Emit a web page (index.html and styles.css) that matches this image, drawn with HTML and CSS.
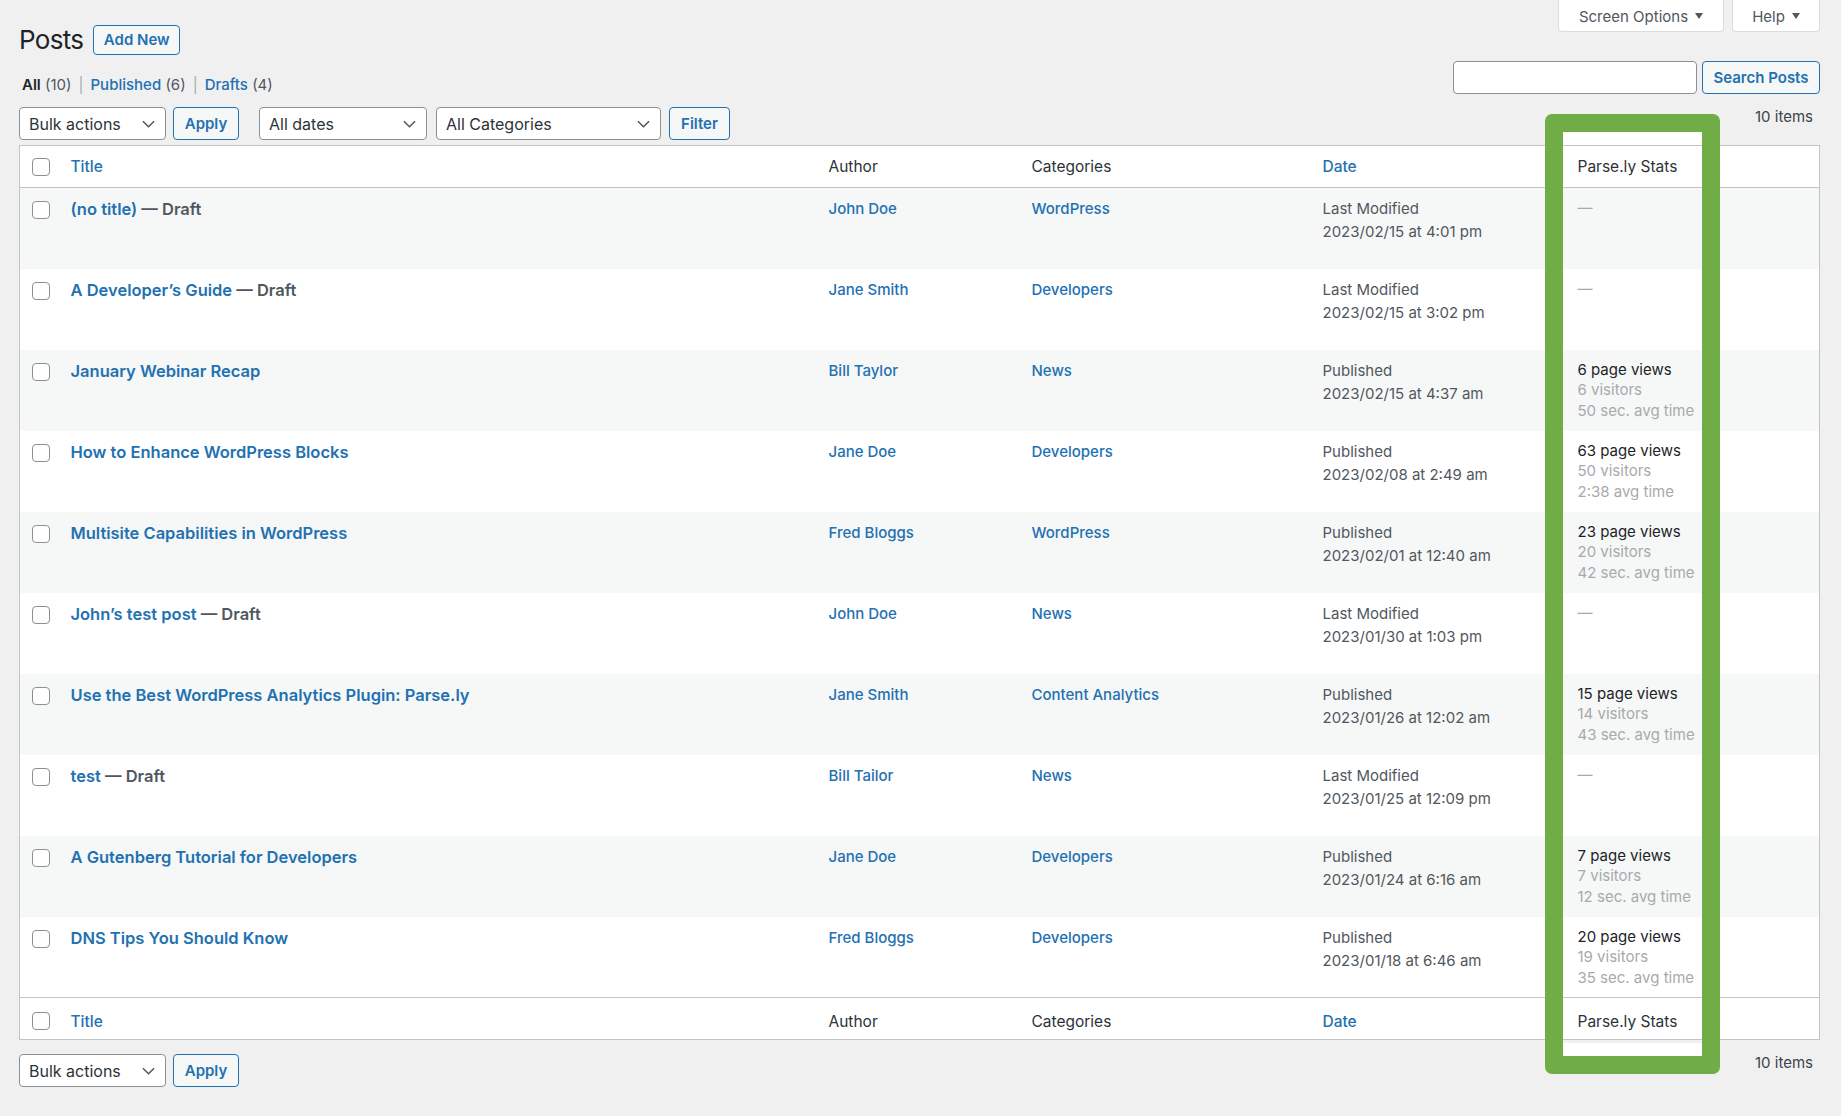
FILE: index.html
```html
<!DOCTYPE html>
<html lang="en">
<head>
    <meta charset="UTF-8">
    <title>Posts</title>
    <link rel="stylesheet" href="styles.css">
</head>
<body>
<div class="wrap">
    <div class="top-row">
        <div class="heading">
            <h1>Posts</h1>
            <button class="btn btn-add">Add New</button>
        </div>
        <div class="meta-tabs">
            <div class="tab tab-screen">Screen Options <span class="tri"></span></div>
            <div class="tab tab-help">Help <span class="tri"></span></div>
        </div>
    </div>

    <div class="views-row">
        <ul class="subsubsub">
            <li><b>All</b> <span class="count">(10)</span></li>
            <li class="sep">|</li>
            <li><a href="#">Published</a> <span class="count">(6)</span></li>
            <li class="sep">|</li>
            <li><a href="#">Drafts</a> <span class="count">(4)</span></li>
        </ul>
        <div class="search-box">
            <div class="search-input"></div>
            <button class="btn btn-search">Search Posts</button>
        </div>
    </div>

    <div class="tablenav">
        <div class="actions">
            <div class="select w-bulk">Bulk actions <svg viewBox="0 0 14 8"><path d="M1 1l6 6 6-6"/></svg></div>
            <button class="btn btn-apply">Apply</button>
            <div class="select w-dates">All dates <svg viewBox="0 0 14 8"><path d="M1 1l6 6 6-6"/></svg></div>
            <div class="select w-cats">All Categories <svg viewBox="0 0 14 8"><path d="M1 1l6 6 6-6"/></svg></div>
            <button class="btn btn-filter">Filter</button>
        </div>
        <div class="num-items">10 items</div>
    </div>

    <table class="posts">
        <colgroup>
            <col class="c-cb"><col class="c-title"><col class="c-author"><col class="c-cat"><col class="c-date"><col class="c-stats">
        </colgroup>
        <thead>
            <tr>
                <th><span class="cb"></span></th>
                <th><a href="#">Title</a></th>
                <th>Author</th>
                <th>Categories</th>
                <th><a href="#">Date</a></th>
                <th>Parse.ly Stats</th>
            </tr>
        </thead>
        <tbody>
            <tr>
                <td><span class="cb"></span></td>
                <td><a class="row-title" href="#">(no title)</a><span class="state"> — Draft</span></td>
                <td><a href="#">John Doe</a></td>
                <td><a href="#">WordPress</a></td>
                <td class="date">Last Modified<br>2023/02/15 at 4:01 pm</td>
                <td class="stats"><span class="dash">—</span></td>
            </tr>
            <tr>
                <td><span class="cb"></span></td>
                <td><a class="row-title" href="#">A Developer’s Guide</a><span class="state"> — Draft</span></td>
                <td><a href="#">Jane Smith</a></td>
                <td><a href="#">Developers</a></td>
                <td class="date">Last Modified<br>2023/02/15 at 3:02 pm</td>
                <td class="stats"><span class="dash">—</span></td>
            </tr>
            <tr>
                <td><span class="cb"></span></td>
                <td><a class="row-title" href="#">January Webinar Recap</a></td>
                <td><a href="#">Bill Taylor</a></td>
                <td><a href="#">News</a></td>
                <td class="date">Published<br>2023/02/15 at 4:37 am</td>
                <td class="stats"><div class="views">6 page views</div><div>6 visitors</div><div>50 sec. avg time</div></td>
            </tr>
            <tr>
                <td><span class="cb"></span></td>
                <td><a class="row-title" href="#">How to Enhance WordPress Blocks</a></td>
                <td><a href="#">Jane Doe</a></td>
                <td><a href="#">Developers</a></td>
                <td class="date">Published<br>2023/02/08 at 2:49 am</td>
                <td class="stats"><div class="views">63 page views</div><div>50 visitors</div><div>2:38 avg time</div></td>
            </tr>
            <tr>
                <td><span class="cb"></span></td>
                <td><a class="row-title" href="#">Multisite Capabilities in WordPress</a></td>
                <td><a href="#">Fred Bloggs</a></td>
                <td><a href="#">WordPress</a></td>
                <td class="date">Published<br>2023/02/01 at 12:40 am</td>
                <td class="stats"><div class="views">23 page views</div><div>20 visitors</div><div>42 sec. avg time</div></td>
            </tr>
            <tr>
                <td><span class="cb"></span></td>
                <td><a class="row-title" href="#">John’s test post</a><span class="state"> — Draft</span></td>
                <td><a href="#">John Doe</a></td>
                <td><a href="#">News</a></td>
                <td class="date">Last Modified<br>2023/01/30 at 1:03 pm</td>
                <td class="stats"><span class="dash">—</span></td>
            </tr>
            <tr>
                <td><span class="cb"></span></td>
                <td><a class="row-title" href="#">Use the Best WordPress Analytics Plugin: Parse.ly</a></td>
                <td><a href="#">Jane Smith</a></td>
                <td><a href="#">Content Analytics</a></td>
                <td class="date">Published<br>2023/01/26 at 12:02 am</td>
                <td class="stats"><div class="views">15 page views</div><div>14 visitors</div><div>43 sec. avg time</div></td>
            </tr>
            <tr>
                <td><span class="cb"></span></td>
                <td><a class="row-title" href="#">test</a><span class="state"> — Draft</span></td>
                <td><a href="#">Bill Tailor</a></td>
                <td><a href="#">News</a></td>
                <td class="date">Last Modified<br>2023/01/25 at 12:09 pm</td>
                <td class="stats"><span class="dash">—</span></td>
            </tr>
            <tr>
                <td><span class="cb"></span></td>
                <td><a class="row-title" href="#">A Gutenberg Tutorial for Developers</a></td>
                <td><a href="#">Jane Doe</a></td>
                <td><a href="#">Developers</a></td>
                <td class="date">Published<br>2023/01/24 at 6:16 am</td>
                <td class="stats"><div class="views">7 page views</div><div>7 visitors</div><div>12 sec. avg time</div></td>
            </tr>
            <tr>
                <td><span class="cb"></span></td>
                <td><a class="row-title" href="#">DNS Tips You Should Know</a></td>
                <td><a href="#">Fred Bloggs</a></td>
                <td><a href="#">Developers</a></td>
                <td class="date">Published<br>2023/01/18 at 6:46 am</td>
                <td class="stats"><div class="views">20 page views</div><div>19 visitors</div><div>35 sec. avg time</div></td>
            </tr>
        </tbody>
        <tfoot>
            <tr>
                <th><span class="cb"></span></th>
                <th><a href="#">Title</a></th>
                <th>Author</th>
                <th>Categories</th>
                <th><a href="#">Date</a></th>
                <th>Parse.ly Stats</th>
            </tr>
        </tfoot>
    </table>

    <div class="tablenav tablenav-bottom">
        <div class="actions">
            <div class="select w-bulk">Bulk actions <svg viewBox="0 0 14 8"><path d="M1 1l6 6 6-6"/></svg></div>
            <button class="btn btn-apply">Apply</button>
        </div>
        <div class="num-items">10 items</div>
    </div>

    <div class="highlight"></div>
</div>
</body>
</html>
```

FILE: styles.css
```css
body {
    margin: 0;
    background: #f0f0f1;
    font-family: Inter, "Noto Sans", sans-serif;
    font-size: 15px;
    color: #3c434a;
}
a {
    color: #2271b1;
    text-decoration: none;
    font-weight: 500;
}
.wrap {
    position: relative;
    padding: 0 21px 0 19px;
    min-height: 1116px;
    box-sizing: border-box;
}
.top-row {
    display: flex;
    justify-content: space-between;
    align-items: flex-start;
    height: 54px;
}
.heading {
    display: flex;
    align-items: center;
    gap: 10px;
    margin-top: 24px;
}
.heading h1 {
    margin: 0;
    font-size: 26px;
    font-weight: 400;
    color: #1d2327;
    letter-spacing: -0.7px;
}
.btn {
    font-family: inherit;
    font-size: 15px;
    font-weight: 600;
    color: #2271b1;
    background: #f6f7f7;
    border: 1px solid #2271b1;
    border-radius: 4px;
    height: 33px;
    padding: 0 11px;
    box-sizing: border-box;
}
.btn-add {
    width: 87px;
    height: 30px;
    padding: 0;
}
.meta-tabs {
    display: flex;
    gap: 8px;
}
.tab {
    height: 32px;
    background: #fff;
    border: 1px solid #dcdcde;
    border-top: none;
    border-radius: 0 0 4px 4px;
    box-sizing: border-box;
    display: flex;
    align-items: center;
    justify-content: center;
    gap: 7px;
    color: #50575e;
    font-size: 15px;
    padding-top: 2px;
}
.tab-screen { width: 166px; }
.tab-help { width: 88px; }
.tri {
    width: 0;
    height: 0;
    border-left: 4px solid transparent;
    border-right: 4px solid transparent;
    border-top: 6px solid #50575e;
    margin-top: -2px;
}
.views-row {
    display: flex;
    justify-content: space-between;
    align-items: flex-start;
}
.subsubsub {
    list-style: none;
    margin: 21px 0 0 3px;
    padding: 0;
    display: flex;
    gap: 7px;
    line-height: 20px;
    font-size: 15px;
}
.subsubsub b {
    color: #1d2327;
    font-weight: 600;
}
.subsubsub .count {
    color: #50575e;
}
.subsubsub .sep {
    color: #a7aaad;
}
.search-box {
    display: flex;
    gap: 5px;
    margin-top: 7px;
}
.search-input {
    width: 244px;
    height: 33px;
    box-sizing: border-box;
    border: 1px solid #8c8f94;
    border-radius: 4px;
    background: #fff;
}
.btn-search {
    width: 118px;
    padding: 0;
}
.tablenav {
    display: flex;
    justify-content: space-between;
    align-items: flex-start;
    margin-top: 12px;
    height: 33px;
}
.actions {
    display: flex;
    align-items: center;
}
.select {
    height: 33px;
    box-sizing: border-box;
    border: 1px solid #8c8f94;
    border-radius: 4px;
    background: #fff;
    color: #2c3338;
    font-size: 16px;
    display: flex;
    align-items: center;
    justify-content: space-between;
    padding: 0 10px 0 9px;
}
.select svg {
    width: 13px;
    height: 8px;
    fill: none;
    stroke: #50575e;
    stroke-width: 1.6;
}
.w-bulk { width: 147px; }
.w-dates { width: 168px; margin-left: 20px; }
.w-cats { width: 225px; margin-left: 9px; }
.btn-apply {
    width: 66px;
    padding: 0;
    margin-left: 7px;
}
.btn-filter {
    width: 61px;
    padding: 0;
    margin-left: 8px;
}
.num-items {
    color: #3c434a;
    font-size: 15px;
    line-height: 20px;
    margin: 0 7px 0 0;
}
.posts {
    width: 100%;
    margin-top: 5px;
    border-collapse: collapse;
    table-layout: fixed;
    background: #fff;
    border: 1px solid #c3c4c7;
}
.c-cb { width: 39px; }
.c-title { width: 758px; }
.c-author { width: 203px; }
.c-cat { width: 291px; }
.c-date { width: 255px; }
.posts th {
    text-align: left;
    font-weight: 400;
    color: #2c3338;
    font-size: 15.5px;
    height: 41px;
    padding: 0 12px;
    vertical-align: middle;
}
.posts thead tr {
    border-bottom: 1px solid #c3c4c7;
}
.posts tfoot tr {
    border-top: 1px solid #c3c4c7;
}
.posts tfoot th {
    height: 36px;
    padding-top: 5px;
}
.posts th:first-child,
.posts td:first-child {
    padding: 0 0 0 12px;
}
.posts tfoot th:first-child {
    padding-top: 5px;
}
.posts th a {
    font-size: 15.5px;
}
.posts tbody tr {
    height: 81px;
}
.posts tbody tr:nth-child(odd) {
    background: #f6f7f7;
}
.posts td {
    vertical-align: top;
    padding: 11px 12px 0;
    font-size: 15px;
    line-height: 20px;
}
.posts td:first-child {
    padding-top: 13px;
}
.cb {
    display: block;
    width: 18px;
    height: 18px;
    box-sizing: border-box;
    border: 1px solid #8c8f94;
    border-radius: 4px;
    background: #fff;
}
.row-title {
    font-size: 16.5px;
    font-weight: 600;
}
.state {
    font-size: 16.5px;
    font-weight: 600;
    color: #50575e;
}
.posts td.date {
    line-height: 23px;
    padding-top: 9px;
    color: #50575e;
}
.posts td.stats {
    line-height: 20.5px;
    padding-top: 10px;
    color: #a7aaad;
}
.stats .views {
    color: #1d2327;
}
.dash {
    color: #a7aaad;
}
.tablenav-bottom {
    margin-top: 14px;
}
.tablenav-bottom .num-items {
    margin-top: -1px;
}
.highlight {
    position: absolute;
    left: 1545px;
    top: 114px;
    width: 175px;
    height: 960px;
    box-sizing: border-box;
    border: 18px solid #70ad47;
    border-radius: 7px;
    background: linear-gradient(to bottom, #fff 0, #fff 13px, transparent 13px, transparent calc(100% - 13px), #fff calc(100% - 13px));
}
```
